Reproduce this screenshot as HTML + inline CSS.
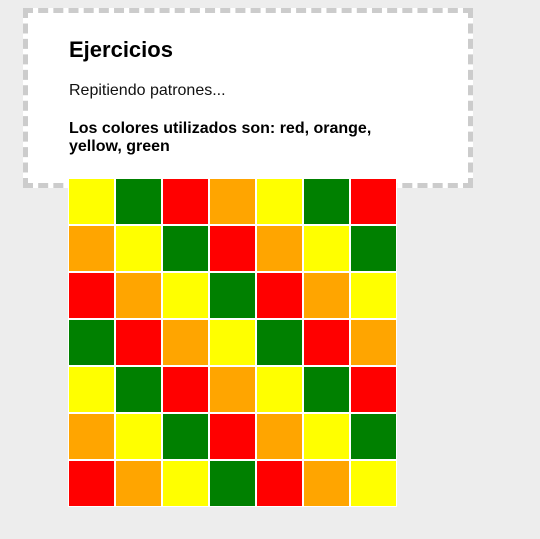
<!DOCTYPE html>
<html><head><style>
html,body{margin:0;padding:0;background:#ededed;width:540px;height:539px;overflow:hidden;font-family:"Liberation Sans",Arial,sans-serif;}
.box{position:absolute;left:23px;top:8px;width:440px;height:170px;background:#fff;border:5px dashed #ccc;}
h1{position:absolute;left:69px;top:37px;margin:0;font-size:22px;font-weight:bold;color:#000;}
.p{position:absolute;left:69px;top:82px;font-size:16px;color:#111;}
.b{position:absolute;left:69px;top:120px;width:320px;font-size:16px;font-weight:bold;line-height:18px;color:#000;}
.grid{position:absolute;left:68px;top:178px;width:329px;height:329px;background:#fff;display:grid;grid-template-columns:repeat(7,47px);grid-template-rows:repeat(7,47px);}
.grid div{border:1px solid #fff;}
</style></head><body>
<div class="box"></div>
<h1>Ejercicios</h1>
<div class="p">Repitiendo patrones...</div>
<div class="b">Los colores utilizados son: red, orange, yellow, green</div>
<div class="grid" id="g">
<div style="background:yellow"></div><div style="background:green"></div><div style="background:red"></div><div style="background:orange"></div><div style="background:yellow"></div><div style="background:green"></div><div style="background:red"></div>
<div style="background:orange"></div><div style="background:yellow"></div><div style="background:green"></div><div style="background:red"></div><div style="background:orange"></div><div style="background:yellow"></div><div style="background:green"></div>
<div style="background:red"></div><div style="background:orange"></div><div style="background:yellow"></div><div style="background:green"></div><div style="background:red"></div><div style="background:orange"></div><div style="background:yellow"></div>
<div style="background:green"></div><div style="background:red"></div><div style="background:orange"></div><div style="background:yellow"></div><div style="background:green"></div><div style="background:red"></div><div style="background:orange"></div>
<div style="background:yellow"></div><div style="background:green"></div><div style="background:red"></div><div style="background:orange"></div><div style="background:yellow"></div><div style="background:green"></div><div style="background:red"></div>
<div style="background:orange"></div><div style="background:yellow"></div><div style="background:green"></div><div style="background:red"></div><div style="background:orange"></div><div style="background:yellow"></div><div style="background:green"></div>
<div style="background:red"></div><div style="background:orange"></div><div style="background:yellow"></div><div style="background:green"></div><div style="background:red"></div><div style="background:orange"></div><div style="background:yellow"></div>
</div>
</body></html>
